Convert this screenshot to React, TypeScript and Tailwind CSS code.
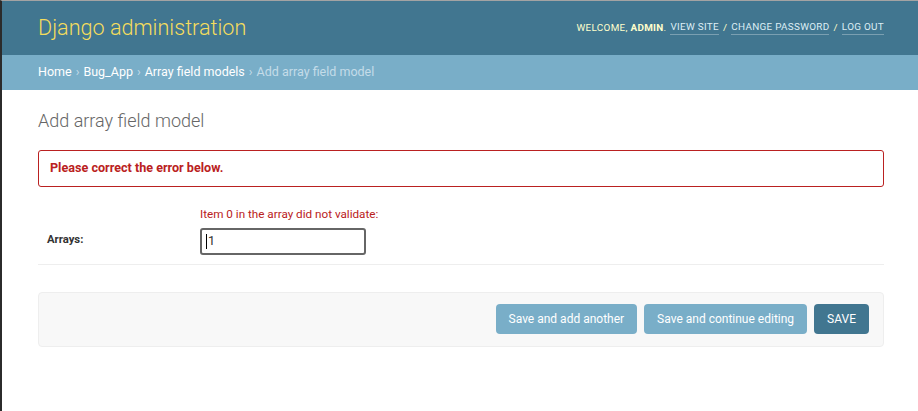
export default function App() {
  const crumbs = ['Home', 'Bug_App', 'Array field models'];
  return (
    <div
      className="min-h-[411px] w-[918px] bg-white border-l-2 border-l-[#2b2b2b] border-t border-t-[#a3a3a3] text-[#333]"
      style={{ fontFamily: 'Roboto, "Liberation Sans", sans-serif' }}
    >
      {/* header */}
      <div className="h-[54px] bg-[#417690] flex items-center justify-between pl-[36px] pr-[34px]">
        <h1 className="text-[21.6px] font-light text-[#f5dd5d] leading-none pb-[1px]">Django administration</h1>
        <div className="text-[9.9px] uppercase tracking-[0.3px] text-[#ffc] flex items-center gap-[4px]">
          <span>
            Welcome, <strong className="font-bold text-[#ffc]">admin</strong>.
          </span>
          <span className="border-b border-[rgba(255,255,255,0.3)] text-[#ddeef5] pb-[1px] leading-tight">View site</span>
          <span>/</span>
          <span className="border-b border-[rgba(255,255,255,0.3)] text-[#ddeef5] pb-[1px] leading-tight">Change password</span>
          <span>/</span>
          <span className="border-b border-[rgba(255,255,255,0.3)] text-[#ddeef5] pb-[1px] leading-tight">Log out</span>
        </div>
      </div>

      {/* breadcrumbs */}
      <div className="h-[35px] bg-[#79aec8] flex items-center pl-[36px] text-[12.5px] text-white">
        {crumbs.map((c) => (
          <span key={c}>
            {c}
            <span className="text-[#c4dce8] mx-[4px]">›</span>
          </span>
        ))}
        <span className="text-[#c4dce8]">Add array field model</span>
      </div>

      {/* content */}
      <div className="pl-[36px] pr-[34px] pt-[22px]">
        <h1 className="text-[18px] font-light text-[#666] leading-none">Add array field model</h1>

        <div className="mt-[20px] h-[37px] border border-[#ba2121] rounded-[3px] flex items-center pl-[11px] text-[12.6px] font-bold text-[#ba2121]">
          Please correct the error below.
        </div>

        <div className="border-b border-[#eee] flex items-end pt-[22px] pb-[9px]">
          <label className="w-[162px] pl-[9px] pb-[6px] text-[11.3px] font-bold text-[#333]">Arrays:</label>
          <div className="flex flex-col">
            <span className="text-[11.7px] text-[#ba2121] leading-none mb-[7px]">Item 0 in the array did not validate:</span>
            <div className="w-[166px] h-[27px] border-2 border-[#666] rounded-[3px] flex items-center pl-[4px] text-[12.6px] text-[#333]">
              <span className="w-px h-[15px] bg-black mr-[1px]" />
              <span>1</span>
            </div>
          </div>
        </div>

        <div className="mt-[27px] h-[55px] bg-[#f8f8f8] border border-[#eee] rounded-[4px] flex items-center justify-end gap-[7px] pr-[14px] text-[12px]">
          <button className="h-[30px] px-[13px] rounded-[4px] bg-[#79aec8] text-white">Save and add another</button>
          <button className="h-[30px] px-[13px] rounded-[4px] bg-[#79aec8] text-white">Save and continue editing</button>
          <button className="h-[30px] px-[13px] rounded-[4px] bg-[#417690] text-white">SAVE</button>
        </div>
      </div>
    </div>
  );
}
